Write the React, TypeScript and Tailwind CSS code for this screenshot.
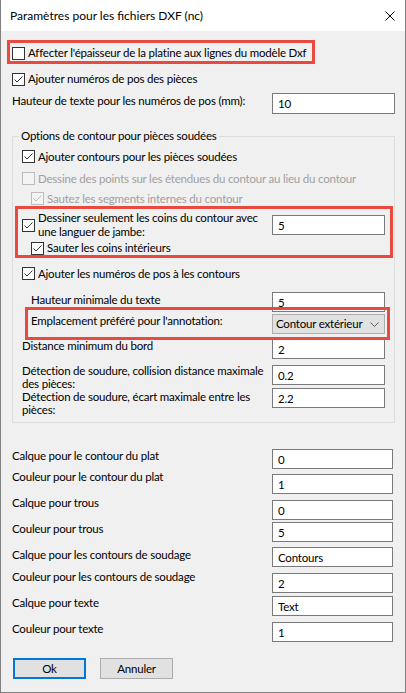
import type { ReactNode } from 'react';

// Case à cocher style Windows 10
function Check({ checked = false, disabled = false }: { checked?: boolean; disabled?: boolean }) {
  return (
    <span
      className={`flex h-[13px] w-[13px] shrink-0 items-center justify-center border ${
        disabled ? 'border-[#bcbcbc] bg-[#f4f4f4]' : 'border-[#333333] bg-white'
      }`}
    >
      {checked && (
        <svg width="11" height="11" viewBox="0 0 11 11">
          <path d="M1.5 5.5 L4 8 L9.5 2.5" fill="none" stroke={disabled ? '#bcbcbc' : '#333333'} strokeWidth="1" />
        </svg>
      )}
    </span>
  );
}

function Field({ value, className = '' }: { value: string; className?: string }) {
  return (
    <input
      readOnly
      value={value}
      className={`h-[20px] shrink-0 border border-[#7a7a7a] bg-white pl-[5px] text-black outline-none ${className}`}
    />
  );
}

function CheckRow({
  label,
  checked,
  disabled,
  className,
}: {
  label: ReactNode;
  checked?: boolean;
  disabled?: boolean;
  className: string;
}) {
  return (
    <div className={`flex items-center gap-[3px] ${className}`}>
      <Check checked={checked} disabled={disabled} />
      <span className={`whitespace-nowrap ${disabled ? 'text-[#a0a0a0]' : ''}`}>{label}</span>
    </div>
  );
}

// Annotation rouge par-dessus le formulaire
function RedBox({ className }: { className: string }) {
  return <div className={`pointer-events-none absolute border-[3px] border-[#e84a3f] ${className}`} />;
}

const lowerRows = [
  { label: 'Calque pour le contour du plat', value: '0', row: 'mt-[26px]', lab: '-mt-[1px]' },
  { label: 'Couleur pour le contour du plat', value: '1', row: 'mt-[5px]', lab: '-mt-[5px]' },
  { label: 'Calque pour trous', value: '0', row: 'mt-[6px]', lab: '-mt-[5px]' },
  { label: 'Couleur pour trous', value: '5', row: 'mt-[2px]', lab: '-mt-[1px]' },
  { label: 'Calque pour les contours de soudage', value: 'Contours', row: 'mt-[5px]', lab: 'mt-0' },
  { label: 'Couleur pour les contours de soudage', value: '2', row: 'mt-[6px]', lab: '-mt-[4px]' },
  { label: 'Calque pour texte', value: 'Text', row: 'mt-[3px]', lab: '-mt-[1px]' },
  { label: 'Couleur pour texte', value: '1', row: 'mt-[6px]', lab: '-mt-[1px]' },
];

export default function App() {
  return (
    <div className="h-[693px] w-[406px] overflow-hidden border-x border-b border-[#808080] bg-[#f0f0f0] font-['Lato',sans-serif] text-[11.5px] leading-[16px] tracking-[-0.2px] text-black">
      {/* Barre de titre */}
      <div className="flex h-[31px] items-center justify-between bg-white pl-[9px] pr-[10px]">
        <span className="text-[12px] tracking-normal">Paramètres pour les fichiers DXF (nc)</span>
        <svg width="10" height="10" viewBox="0 0 10 10">
          <path d="M0.5 0.5 L9.5 9.5 M9.5 0.5 L0.5 9.5" stroke="#000" strokeWidth="1" />
        </svg>
      </div>

      <div className="pt-[11px]">
        <div className="relative">
          <CheckRow className="h-[22px] pl-[11px]" label="Affecter l'épaisseur de la platine aux lignes du modèle Dxf" />
          <RedBox className="left-[6px] top-[-2px] h-[24px] w-[308px]" />
        </div>
        <CheckRow className="mt-[4px] h-[22px] pl-[11px]" checked label="Ajouter numéros de pos des pièces" />

        <div className="mt-[3px] flex h-[21px] items-start pl-[11px]">
          <span className="min-w-0 flex-1 whitespace-nowrap">Hauteur de texte pour les numéros de pos (mm):</span>
          <Field value="10" className="mr-[10px] h-[21px] w-[123px]" />
        </div>

        {/* Groupe options de contour */}
        <fieldset className="mt-[14px] ml-[11px] mr-[10px] min-w-0 border border-[#dcdcdc] pb-[14px]">
          <legend className="ml-[6px] px-[2px] leading-[16px]">Options de contour pour pièces soudées</legend>

          <CheckRow className="mt-[2px] h-[21px] pl-[9px]" checked label="Ajouter contours pour les pièces soudées" />
          <CheckRow className="mt-[1px] h-[21px] pl-[9px]" disabled label="Dessine des points sur les étendues du contour au lieu du contour" />
          <CheckRow className="h-[19px] pl-[18px]" disabled checked label="Sautez les segments internes du contour" />

          <div className="relative mt-[3px]">
            <div className="flex h-[28px] items-center pl-[9px]">
              <Check checked />
              <span className="ml-[3px] min-w-0 flex-1 whitespace-nowrap leading-[14px]">
                Dessiner seulement les coins du contour avec
                <br />
                une languer de jambe:
              </span>
              <Field value="5" className="mr-[9px] w-[113px]" />
            </div>
            <CheckRow className="h-[18px] pl-[18px]" checked label="Sauter les coins intérieurs" />
            <RedBox className="left-[2px] right-[1px] top-[-5px] bottom-[-1px]" />
          </div>

          <CheckRow className="mt-[6px] h-[21px] pl-[9px]" checked label="Ajouter les numéros de pos à les contours" />

          <div className="mt-[8px] flex h-[20px] items-start pl-[18px]">
            <span className="min-w-0 flex-1 whitespace-nowrap">Hauteur minimale du texte</span>
            <Field value="5" className="mr-[9px] w-[113px]" />
          </div>

          <div className="relative mt-[2px] flex h-[20px] items-start pl-[18px]">
            <span className="-mt-[1px] min-w-0 flex-1 whitespace-nowrap">Emplacement préféré pour l'annotation:</span>
            <div className="mr-[9px] flex h-[20px] w-[113px] shrink-0 items-center justify-between border border-[#adadad] bg-[#e1e1e1] pl-[3px] pr-[5px]">
              <span className="whitespace-nowrap">Contour extérieur</span>
              <svg width="9" height="5" viewBox="0 0 9 5">
                <path d="M0.5 0.5 L4.5 4.5 L8.5 0.5" fill="none" stroke="#606060" strokeWidth="1" />
              </svg>
            </div>
            <RedBox className="left-[12px] right-[4px] top-[-7px] bottom-[-6px]" />
          </div>

          <div className="mt-[5px] flex h-[20px] items-start pl-[9px]">
            <span className="-mt-[1px] min-w-0 flex-1 whitespace-nowrap">Distance minimum du bord</span>
            <Field value="2" className="mr-[9px] w-[113px]" />
          </div>

          <div className="mt-[6px] flex h-[20px] items-start pl-[9px]">
            <span className="-mt-[1px] min-w-0 flex-1 whitespace-nowrap leading-[13px]">
              Détection de soudure, collision distance maximale
              <br />
              des pièces:
            </span>
            <Field value="0.2" className="mr-[9px] w-[113px]" />
          </div>

          <div className="mt-[3px] flex h-[20px] items-start pl-[9px]">
            <span className="mt-[2px] min-w-0 flex-1 whitespace-nowrap leading-[13px]">
              Détection de soudure, écart maximale entre les
              <br />
              pièces:
            </span>
            <Field value="2.2" className="mr-[9px] w-[113px]" />
          </div>
        </fieldset>

        {lowerRows.map((r) => (
          <div key={r.label} className={`flex h-[20px] items-start pl-[11px] ${r.row}`}>
            <span className={`min-w-0 flex-1 whitespace-nowrap ${r.lab}`}>{r.label}</span>
            <Field value={r.value} className="mr-[12px] w-[121px]" />
          </div>
        ))}

        <div className="mt-[16px] flex gap-[14px] pl-[12px]">
          <button className="h-[21px] w-[73px] border-2 border-[#0078d7] bg-[#e1e1e1]">Ok</button>
          <button className="h-[21px] w-[73px] border border-[#adadad] bg-[#e1e1e1]">Annuler</button>
        </div>
      </div>
    </div>
  );
}
